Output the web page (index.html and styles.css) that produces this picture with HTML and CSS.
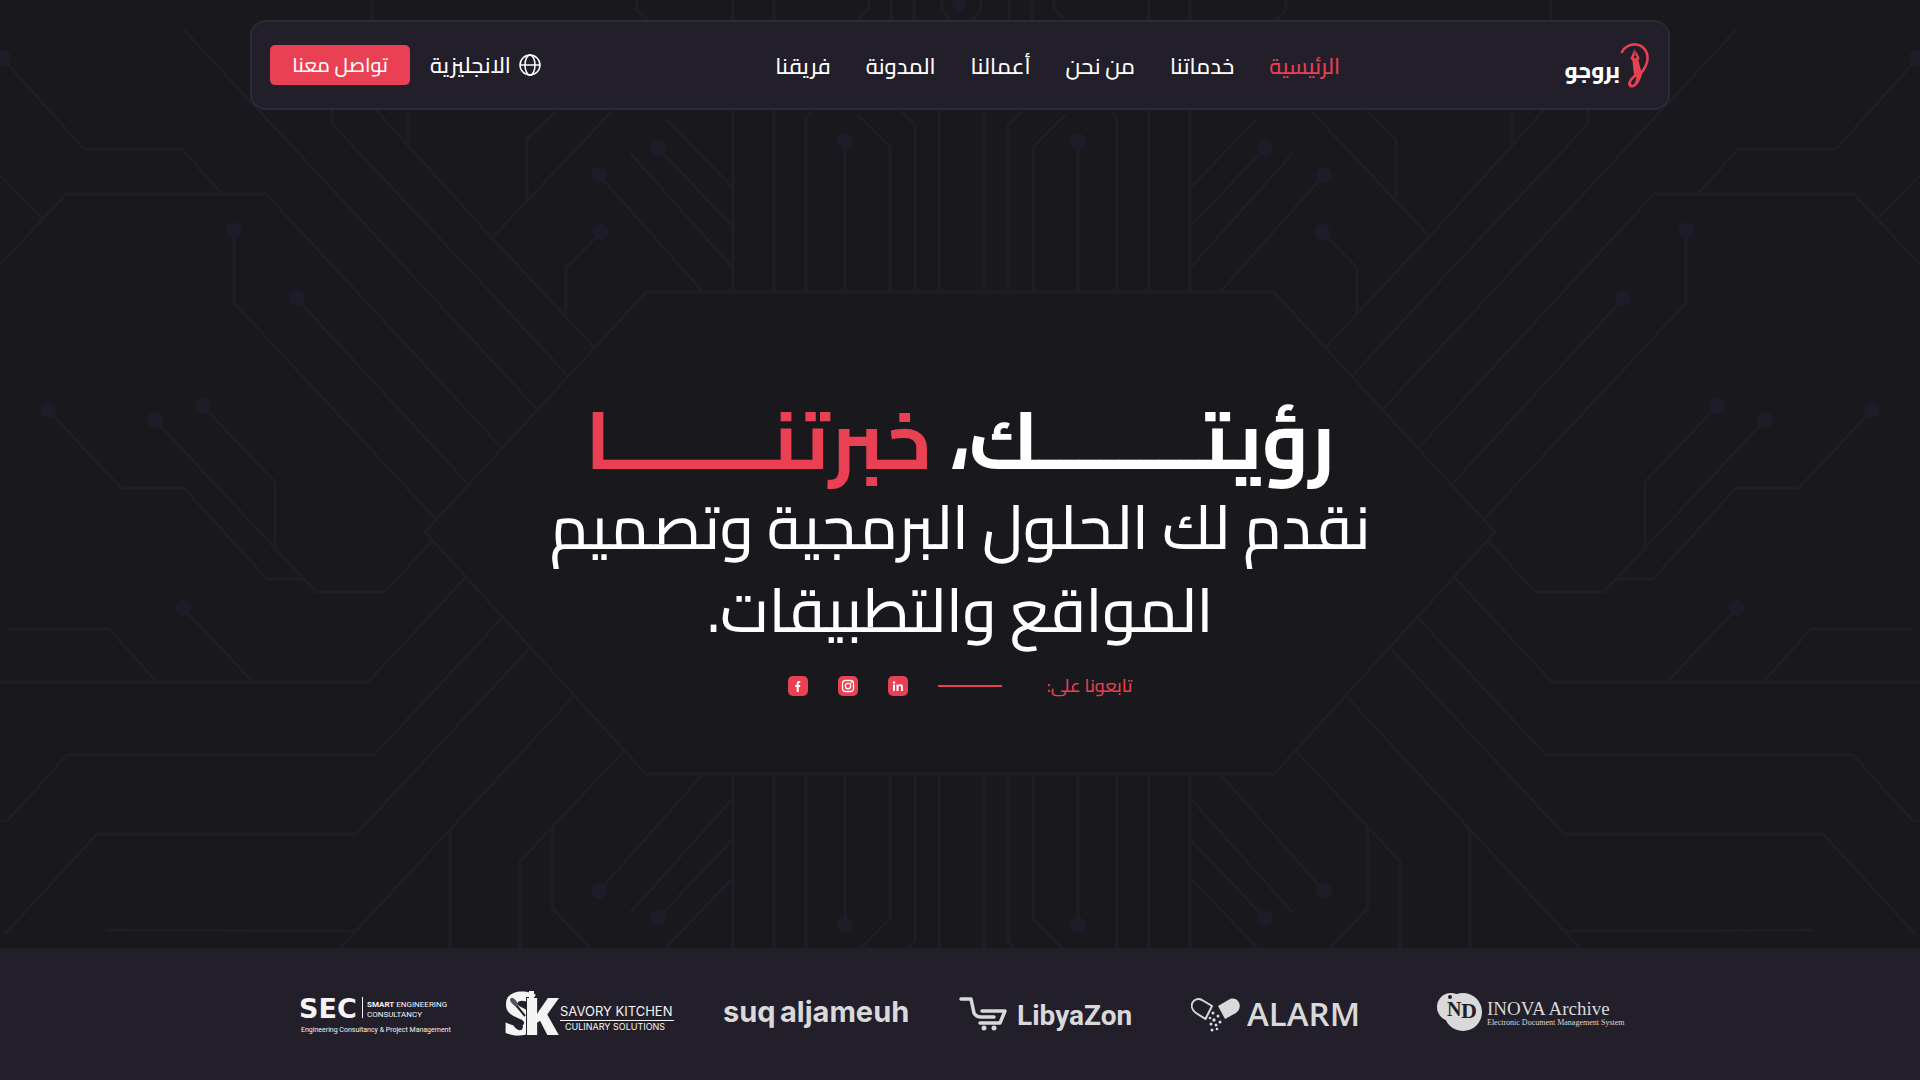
FILE: index.html
```
<!DOCTYPE html>
<html lang="ar" dir="rtl">
<head>
<meta charset="utf-8">
<meta name="viewport" content="width=device-width, initial-scale=1">
<title>بروجو</title>
<link rel="stylesheet" href="styles.css">
</head>
<body>
<main class="hero">
  <svg class="circuit" viewBox="0 0 1920 948" preserveAspectRatio="xMidYMid slice" aria-hidden="true">
    <defs>
      <g id="side">
        <!-- outer traces -->
        <path d="M3 59 84 149H182L221 193M0 175 42 218M0 265 66 194H266L501 447M183 29 536 408M332 109V124L480 281 567 375M375 109 480 225 594 347M408 107V143M234 231V303L435 518M297 299 467 483"/>
        <path d="M48 410 121 488H184L267 579H303M155 420 316 592H385L432 541M203 406 275 482V548M183 608 252 681M9 629H109L156 681M0 682H368L465 578M0 821 8 820 67 755H374L502 618M4 935 97 834H356L529 649M340 948 573 697M450 830V948M106 930 356 931M623 752 520 861V948M552 828V908L590 948"/>
        <!-- central chip outline -->
        <path d="M961 292H646L425 532 646 774H961"/>
        <circle cx="3" cy="58" r="8"/><circle cx="234" cy="230" r="8"/><circle cx="297" cy="298" r="8"/>
        <circle cx="48" cy="410" r="8"/><circle cx="155" cy="420" r="8"/><circle cx="203" cy="406" r="8"/><circle cx="183" cy="608" r="8"/>
      </g>
      <g id="pins">
        <path d="M733 0V292M774 0V292M812 111 806 118V292M845 141V292M857 114 890 147V292M901 111 915 125V292M939 100V292M658 148 733 227M666 119 733 188M630 153 733 268M599 175 703 292"/>
        <circle cx="845" cy="141" r="8"/><circle cx="658" cy="148" r="8"/><circle cx="599" cy="175" r="8"/>
      </g>
      <g id="top">
        <path d="M601 232 566 268V315M612 111 494 236M557 111 527 139V198M372 0V20M637 0V10L650 22M869 0V8L858 20M891 0V20M914 0V20M942 0V10L952 22"/>
        <circle cx="601" cy="232" r="8"/>
      </g>
      <g id="inner">
        <use href="#pins"/><use href="#top"/>
        <use href="#pins" transform="matrix(1 0 0 -1 0 1066)"/>
      </g>
    </defs>
    <use href="#side"/><use href="#inner"/>
    <use href="#side" transform="matrix(-1 0 0 1 1920 0)"/>
    <use href="#inner" transform="matrix(-1 0 0 1 1923 0)"/>
    <circle cx="959" cy="4" r="7"/>
  </svg>

  <header class="bar">
    <a class="brand" href="#">
      <svg class="brand-mark" viewBox="0 0 30 46" aria-hidden="true">
        <path d="M2 10C5 4 11 2 16 2.500C25 3.500 29 12 27 20C25.500 27 21 31 18.500 34" fill="none" stroke="#ea4054" stroke-width="2.600" stroke-linecap="round"/>
        <path d="M14.500 7 19.500 15.500 18.500 18.500 22 32.500C20.500 38 17 45.500 12 45.500C6 45.500 7 38 14 33L12.500 19 10.500 16.500Z" fill="#ea4054"/>
        <path d="M15 8V14M16 35C12 38 10.500 41 12 42.500C14 43 15.500 39 16 35Z" fill="#221f2a" stroke="#221f2a" stroke-width=".7"/>
        <circle cx="15.200" cy="15" r="1.300" fill="#221f2a"/>
      </svg>
      <span class="brand-name">بروجو</span>
    </a>
    <nav class="menu">
      <a class="active" href="#">الرئيسية</a>
      <a href="#">خدماتنا</a>
      <a href="#">من نحن</a>
      <a href="#">أعمالنا</a>
      <a href="#">المدونة</a>
      <a href="#">فريقنا</a>
    </nav>
    <div class="actions">
      <a class="lang" href="#">
        <svg class="globe" viewBox="0 0 22 22" aria-hidden="true"><circle cx="11" cy="11" r="10"/><ellipse cx="11" cy="11" rx="5" ry="10"/><path d="M1 11H21"/></svg>
        <span>الانجليزية</span>
      </a>
      <button class="contact" type="button">تواصل معنا</button>
    </div>
  </header>

  <section class="intro">
    <h1>رؤيتــــــــك، <span>خبرتنــــــــا</span></h1>
    <p class="lead">نقدم لك الحلول البرمجية وتصميم المواقع والتطبيقات.</p>
    <div class="follow">
      <span class="follow-label">تابعونا على:</span>
      <span class="rule"></span>
      <div class="social">
        <a href="#" aria-label="LinkedIn"><svg viewBox="0 0 20 20"><rect width="20" height="20" rx="5" fill="#ea4054"/><path d="M5 8.500H7V15H5ZM8.500 8.500H10.400V9.400C11 8.600 11.700 8.300 12.500 8.300C14.300 8.300 15 9.500 15 11.300V15H13V11.700C13 10.700 12.700 10.100 11.900 10.100C11 10.100 10.500 10.700 10.500 11.700V15H8.500Z" fill="#fff"/><circle cx="6" cy="6.400" r="1.200" fill="#fff"/></svg></a>
        <a href="#" aria-label="Instagram"><svg viewBox="0 0 20 20"><rect width="20" height="20" rx="5" fill="#ea4054"/><rect x="4.500" y="4.500" width="11" height="11" rx="3" fill="none" stroke="#fff" stroke-width="1.300"/><circle cx="10" cy="10" r="2.700" fill="none" stroke="#fff" stroke-width="1.300"/><circle cx="13.200" cy="6.800" r=".8" fill="#fff"/></svg></a>
        <a href="#" aria-label="Facebook"><svg viewBox="0 0 20 20"><rect width="20" height="20" rx="5" fill="#ea4054"/><path d="M8.700 16V10.900H7.200V9H8.700V7.500C8.700 5.800 9.600 5 11 5H12.300V6.800H11.500C10.900 6.800 10.700 7.100 10.700 7.600V9H12.300L12 10.900H10.700V16Z" fill="#fff"/></svg></a>
      </div>
    </div>
  </section>
</main>

<footer class="clients">
  <svg class="logo" width="189" height="60" viewBox="0 0 189 60" direction="ltr" role="img" aria-label="INOVA Archive">
    <circle cx="14" cy="23" r="14"/><circle cx="26" cy="28" r="19"/>
    <circle cx="13" cy="13" r="2" fill="#221f2a"/>
    <text class="serif dark" x="10" y="32" font-size="20">N</text>
    <text class="serif dark" x="24" y="34" font-size="22">D</text>
    <text class="serif" x="50" y="31" font-size="19">INOVA Archive</text>
    <text class="serif" x="50" y="41" font-size="8">Electronic Document Management System</text>
  </svg>
  <svg class="logo" width="196" height="60" viewBox="0 0 196 60" direction="ltr" role="img" aria-label="ALARM">
    <path d="M21 22 14.500 35 5 29C-4 22 3 12 11 16Z" fill="none" stroke="#d9d9d9" stroke-width="2" stroke-linejoin="round"/>
    <path d="M27 22 39 15C47 12 53 23 45 29L34 35Z"/>
    <circle cx="22" cy="29" r="1.500"/><circle cx="27" cy="32" r="1.500"/><circle cx="19" cy="34" r="1.300"/><circle cx="23" cy="36" r="1.700"/><circle cx="29" cy="38" r="1.500"/><circle cx="20" cy="40" r="1.500"/><circle cx="25" cy="41" r="1.500"/><circle cx="21" cy="46" r="1.500"/><circle cx="26" cy="45" r="1.300"/>
    <text class="open" x="56" y="42" font-size="33">ALARM</text>
  </svg>
  <svg class="logo" width="182" height="60" viewBox="0 0 182 60" direction="ltr" role="img" aria-label="LibyaZon">
    <path d="M2 15H12L15 29Q17 33 22 33H35M23 27H46L41 39H21" fill="none" stroke="#d9d9d9" stroke-width="3.500" stroke-linecap="round" stroke-linejoin="round"/>
    <circle cx="25" cy="44" r="2.500"/><circle cx="35" cy="44" r="2.500"/>
    <text class="roboto" x="58" y="41" font-size="28">LibyaZon</text>
  </svg>
  <svg class="logo" width="185" height="60" viewBox="0 0 185 60" direction="ltr" role="img" aria-label="suq aljameuh">
    <text class="inter-bold" x="-1" y="38" font-size="29">suq</text>
    <text class="inter-bold" x="56" y="38" font-size="29">aljameuh</text>
  </svg>
  <svg class="logo white" width="169" height="60" viewBox="0 0 169 60" direction="ltr" role="img" aria-label="Savory Kitchen Culinary Solutions">
    <text class="mark" x="-2" y="51" font-size="60">S</text>
    <text class="mark" x="18" y="51" font-size="52" stroke="#221f2a" stroke-width="2" paint-order="stroke">K</text>
    <path d="M24 7H29V20H24Z"/>
    <path d="M6 15 20 32" stroke="#221f2a" stroke-width="2"/><ellipse cx="9" cy="18" rx="2.500" ry="5" transform="rotate(-40 9 18)" fill="#55525c"/><ellipse cx="13" cy="41" rx="4" ry="6" transform="rotate(-40 13 41)" fill="#221f2a"/>
    <text class="inter" x="55" y="32" font-size="13">SAVORY KITCHEN</text>
    <rect x="55" y="36" width="114" height="1"/>
    <text class="inter" x="60" y="46" font-size="9">CULINARY SOLUTIONS</text>
  </svg>
  <svg class="logo white" width="155" height="60" viewBox="0 0 155 60" direction="ltr" role="img" aria-label="SEC Smart Engineering Consultancy">
    <text class="wide" x="-1" y="34" font-size="27">SEC</text>
    <rect x="62" y="13" width="1" height="21"/>
    <text class="small" x="67" y="23" font-size="8"><tspan font-weight="700">SMART</tspan> ENGINEERING</text>
    <text class="small" x="67" y="33" font-size="8">CONSULTANCY</text>
    <text class="small" x="1" y="48" font-size="7">Engineering Consultancy &amp; Project Management</text>
  </svg>
</footer>
</body>
</html>
```
FILE: styles.css
```
* { box-sizing: border-box; }

body {
  margin: 0;
  min-height: 100vh;
  display: flex;
  flex-direction: column;
  background: #18181d;
  color: #fff;
  font-family: Cairo, "Noto Sans Arabic", sans-serif;
  font-weight: 500;
}

a { color: inherit; text-decoration: none; }

.hero {
  position: relative;
  flex: 1;
  display: flex;
  flex-direction: column;
  align-items: center;
  padding-top: 20px;
}

.circuit {
  position: absolute;
  inset: 0;
  width: 100%;
  height: 100%;
  fill: #1e1c28;
}
.circuit path { fill: none; stroke: #1f1e27; stroke-width: 3; }

.bar {
  position: relative;
  display: flex;
  align-items: center;
  justify-content: space-between;
  width: calc(100% - 40px);
  max-width: 1420px;
  min-height: 90px;
  padding: 0 18px;
  background: #221f2a;
  border: 2px solid #2d2a37;
  border-radius: 16px;
}

.brand { display: flex; align-items: center; }
.brand-mark { width: 30px; height: 46px; }
.brand-name { padding-top: 10px; font-size: 22px; font-weight: 800; line-height: 36px; }

.menu { display: flex; gap: 35px; padding: 2px 0 0 10px; font-size: 22px; line-height: 36px; }
.menu .active { color: #ea4054; }

.actions { display: flex; align-items: center; gap: 20px; }
.lang { display: flex; align-items: center; gap: 8px; font-size: 22px; line-height: 36px; }
.globe { width: 22px; height: 22px; fill: none; stroke: #fff; stroke-width: 1.5px; }
.contact {
  width: 140px;
  height: 40px;
  padding: 0;
  border: 0;
  border-radius: 5px;
  background: #ea4054;
  color: #fff;
  font: 500 20px/40px Cairo, "Noto Sans Arabic", sans-serif;
}

.intro {
  position: relative;
  flex: 1;
  display: flex;
  flex-direction: column;
  align-items: center;
  justify-content: center;
  padding: 40px 20px 0;
  text-align: center;
}
.intro h1 { margin: 0; font-size: 80px; font-weight: 700; line-height: 92px; }
.intro h1 span { color: #ea4054; }
.lead { margin: 0; max-width: 860px; font-size: 61px; line-height: 83px; }

.follow { display: flex; align-items: center; margin-top: 16px; }
.follow-label { color: #ea4054; font-size: 18px; line-height: 36px; }
.rule { width: 64px; height: 2px; margin: 0 45px 0 30px; background: #ea4054; }
.social { display: flex; gap: 30px; }
.social a, .social svg { display: block; width: 20px; height: 20px; }

.clients {
  display: flex;
  flex-wrap: wrap;
  justify-content: center;
  gap: 50px;
  padding: 36px 20px 36px 26px;
  background: #221f2a;
}
.logo { display: block; fill: #d9d9d9; font-weight: 400; }
.logo.white { fill: #f4f4f5; }
.logo .serif { font-family: "Liberation Serif", serif; }
.logo .dark { fill: #221f2a; font-weight: 700; }
.logo .open { font-family: "Open Sans", sans-serif; font-weight: 600; }
.logo .roboto { font-family: Roboto, sans-serif; font-weight: 700; }
.logo .inter { font-family: Inter, sans-serif; }
.logo .inter-bold { font-family: Inter, sans-serif; font-weight: 700; }
.logo .wide { font-family: "DejaVu Sans", sans-serif; font-weight: 700; }
.logo .small { font-family: Roboto, sans-serif; }
.logo .mark { font-family: "Open Sans", sans-serif; font-weight: 800; }
```
